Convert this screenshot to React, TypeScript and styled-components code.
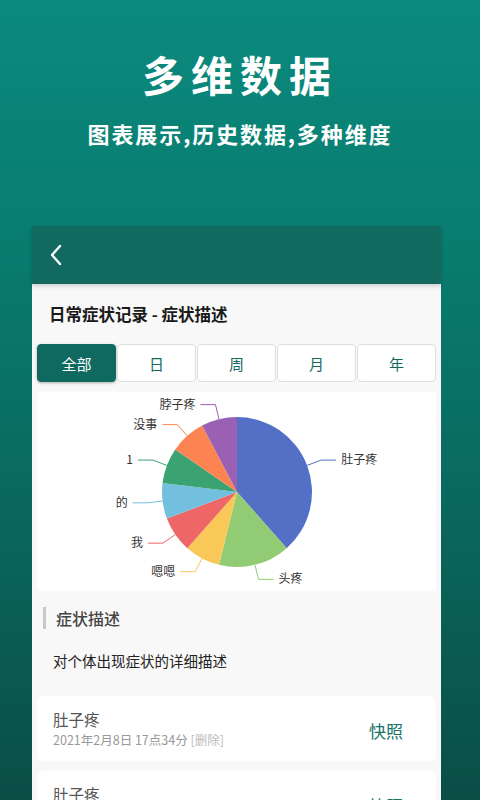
import React from 'react'
import styled, { createGlobalStyle } from 'styled-components'

const GlobalStyle = createGlobalStyle`
  html, body {
    margin: 0;
    padding: 0;
  }
  body {
    font-family: 'Noto Sans CJK SC', 'Noto Sans', sans-serif;
  }
`

type Slice = { name: string; value: number; color: string }

const slices: Slice[] = [
  { name: '肚子疼', value: 5, color: '#5470c6' },
  { name: '头疼', value: 2, color: '#91cc75' },
  { name: '嗯嗯', value: 1, color: '#fac858' },
  { name: '我', value: 1, color: '#ee6666' },
  { name: '的', value: 1, color: '#73c0de' },
  { name: '1', value: 1, color: '#3ba272' },
  { name: '没事', value: 1, color: '#fc8452' },
  { name: '脖子疼', value: 1, color: '#9a60b4' },
]

const tabs = ['全部', '日', '周', '月', '年']

const records = [
  { name: '肚子疼', time: '2021年2月8日 17点34分' },
  { name: '肚子疼', time: '2021年2月8日 17点30分' },
]

const CX = 200
const CY = 100
const R = 75

// angle measured clockwise from 12 o'clock
const pt = (deg: number, r: number) => {
  const a = (deg * Math.PI) / 180
  return [CX + r * Math.sin(a), CY - r * Math.cos(a)]
}

const PieChart = () => {
  const total = slices.reduce((s, d) => s + d.value, 0)
  let start = 0
  return (
    <svg width="399" height="199" viewBox="0 0 399 199">
      {slices.map((d) => {
        const sweep = (d.value / total) * 360
        const end = start + sweep
        const mid = start + sweep / 2
        const [x1, y1] = pt(start, R)
        const [x2, y2] = pt(end, R)
        const large = sweep > 180 ? 1 : 0
        const [ax, ay] = pt(mid, R)
        const [bx, by] = pt(mid, R + 15)
        const right = Math.sin((mid * Math.PI) / 180) >= 0
        const cx2 = bx + (right ? 15 : -15)
        start = end
        return (
          <g key={d.name}>
            <path
              d={`M${CX},${CY} L${x1},${y1} A${R},${R} 0 ${large} 1 ${x2},${y2} Z`}
              fill={d.color}
            />
            <polyline
              points={`${ax},${ay} ${bx},${by} ${cx2},${by}`}
              fill="none"
              stroke={d.color}
              strokeWidth="1"
            />
            <text
              x={cx2 + (right ? 5 : -5)}
              y={by + 4}
              textAnchor={right ? 'start' : 'end'}
              fontSize="12"
              fill="#333"
            >
              {d.name}
            </text>
          </g>
        )
      })}
    </svg>
  )
}

const App = () => {
  return (
    <Page>
      <GlobalStyle />
      <Hero>
        <Title>多维数据</Title>
        <Subtitle>图表展示,历史数据,多种维度</Subtitle>
      </Hero>
      <Phone>
        <AppBar>
          <svg width="16" height="24" viewBox="0 0 16 24">
            <path
              d="M12 3 L4 12 L12 21"
              fill="none"
              stroke="#fff"
              strokeWidth="2.4"
              strokeLinecap="round"
              strokeLinejoin="round"
            />
          </svg>
        </AppBar>
        <Body>
          <PageTitle>日常症状记录 - 症状描述</PageTitle>
          <Tabs>
            {tabs.map((t, i) => (
              <Tab key={t} active={i === 0}>
                {t}
              </Tab>
            ))}
          </Tabs>
          <ChartBox>
            <PieChart />
          </ChartBox>
          <SectionHead>症状描述</SectionHead>
          <Desc>对个体出现症状的详细描述</Desc>
          {records.map((r, i) => (
            <Record key={i}>
              <RecordInfo>
                <RecordName>{r.name}</RecordName>
                <RecordTime>
                  {r.time} <span>[删除]</span>
                </RecordTime>
              </RecordInfo>
              <Snapshot>快照</Snapshot>
            </Record>
          ))}
        </Body>
      </Phone>
    </Page>
  )
}

export default App

const Page = styled.div`
  height: 800px;
  overflow: hidden;
  display: flex;
  flex-direction: column;
  background: linear-gradient(180deg, #0b8a7e 0%, #097c70 30%, #0a6a5f 60%, #0a4e46 100%);
`

const Hero = styled.div`
  display: flex;
  flex-direction: column;
  align-items: center;
  padding-top: 44px;
  height: 226px;
  box-sizing: border-box;
  flex-shrink: 0;
`

const Title = styled.h1`
  margin: 0;
  font-size: 42px;
  line-height: 60px;
  font-weight: 700;
  letter-spacing: 7px;
  color: #fff;
`

const Subtitle = styled.p`
  margin: 0;
  margin-top: 14px;
  font-size: 22px;
  line-height: 30px;
  font-weight: 700;
  letter-spacing: 1.9px;
  color: #fff;
`

const Phone = styled.div`
  width: 409px;
  margin-left: 32px;
  background: #f8f8f8;
  flex-shrink: 0;
`

const AppBar = styled.div`
  position: relative;
  z-index: 1;
  height: 58px;
  background: #11695f;
  display: flex;
  align-items: center;
  padding-left: 16px;
  box-shadow: 0 2px 4px rgba(0, 0, 0, 0.18);
`

const Body = styled.div`
  padding: 0 5px;
  display: flex;
  flex-direction: column;
`

const PageTitle = styled.div`
  height: 60px;
  display: flex;
  align-items: center;
  padding-left: 12px;
  font-size: 16.5px;
  font-weight: 700;
  color: #1a1a1a;
`

const Tabs = styled.div`
  display: grid;
  grid-template-columns: repeat(5, 1fr);
  gap: 1px;
`

const Tab = styled.div<{ active?: boolean }>`
  height: 38px;
  display: flex;
  align-items: center;
  justify-content: center;
  box-sizing: border-box;
  border-radius: 4px;
  font-size: 15px;
  color: ${({ active }) => (active ? '#fff' : '#14695f')};
  background: ${({ active }) => (active ? '#10695f' : '#fff')};
  border: 1px solid ${({ active }) => (active ? '#10695f' : '#dedede')};
  box-shadow: ${({ active }) => (active ? '0 1px 3px rgba(0,0,0,0.3)' : 'none')};
`

const ChartBox = styled.div`
  margin-top: 10px;
  background: #fff;
  border-radius: 3px;
  height: 199px;
  svg {
    display: block;
    font-family: 'Noto Sans CJK SC', sans-serif;
  }
`

const SectionHead = styled.div`
  margin: 16px 0 0 6px;
  border-left: 3px solid #c8c8c8;
  height: 22px;
  display: flex;
  align-items: center;
  padding-left: 10px;
  font-size: 16px;
  font-weight: 500;
  color: #444;
`

const Desc = styled.div`
  padding: 20px 0 0 16px;
  height: 47px;
  font-size: 14.5px;
  color: #222;
  line-height: 24px;
`

const Record = styled.div`
  margin-bottom: 10px;
  height: 65px;
  background: #fff;
  border-radius: 6px;
  display: flex;
  align-items: center;
  justify-content: space-between;
  padding: 0 33px 0 16px;
  flex-shrink: 0;
`

const RecordInfo = styled.div`
  display: flex;
  flex-direction: column;
`

const RecordName = styled.div`
  font-size: 15.5px;
  line-height: 22px;
  color: #555;
`

const RecordTime = styled.div`
  font-size: 12.5px;
  line-height: 20px;
  color: #999;
  span {
    color: #bbb;
  }
`

const Snapshot = styled.div`
  font-size: 17px;
  color: #177368;
  margin-top: 4px;
`
